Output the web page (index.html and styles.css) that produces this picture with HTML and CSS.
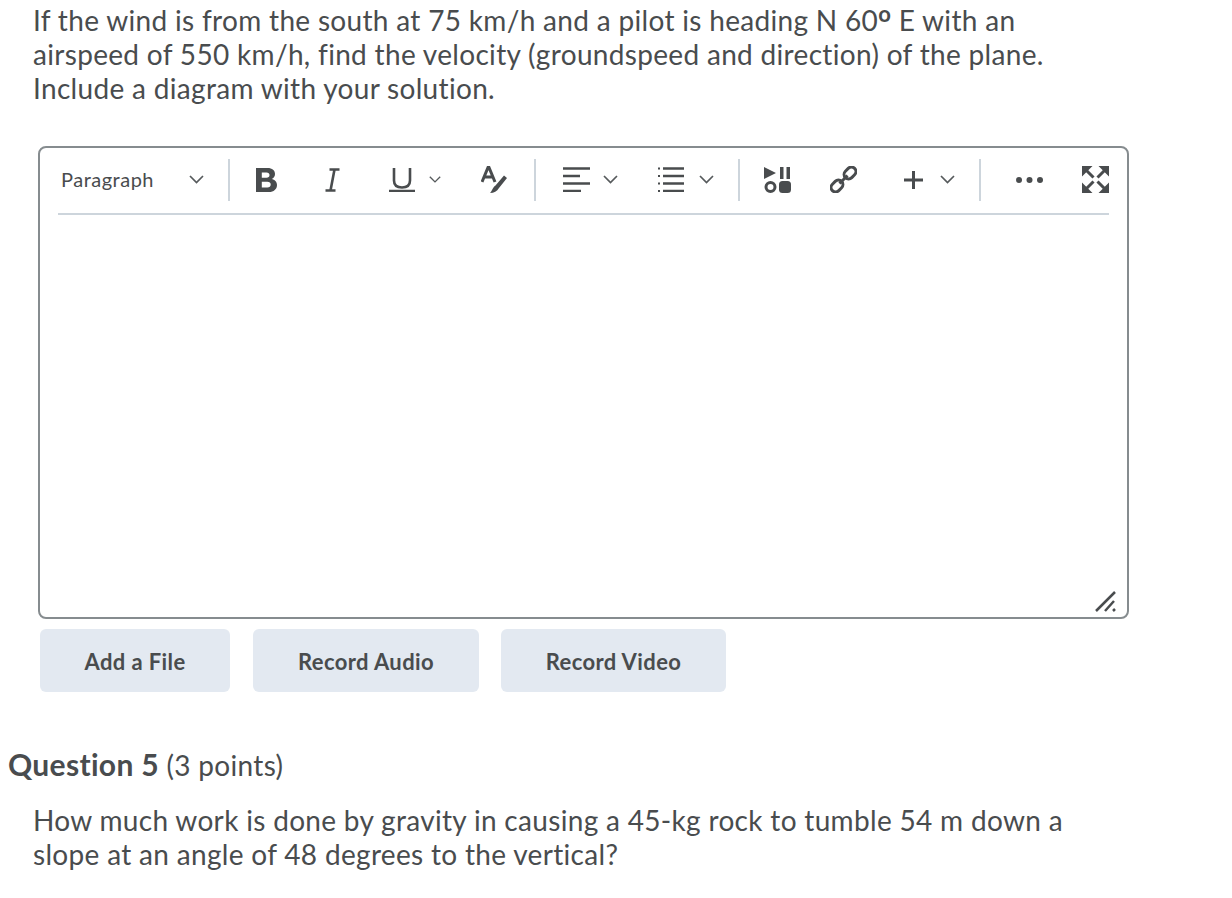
FILE: index.html
```html
<!DOCTYPE html>
<html lang="en">

<head>
    <meta charset="UTF-8">
    <title>Quiz</title>
    <link rel="stylesheet" href="styles.css">
</head>

<body>
    <p class="question-text first">If the wind is from the south at 75 km/h and a pilot is heading N 60<span class="deg">o</span> E with an airspeed of 550 km/h, find the velocity (groundspeed and direction) of the plane. Include a diagram with your solution.</p>

    <div class="editor">
        <div class="toolbar">
            <div class="format-select">Paragraph</div>
            <svg class="chev chev-format" viewBox="0 0 15 9"><path d="M1 1l6.5 6.5L14 1"/></svg>
            <span class="divider div-format"></span>

            <svg class="icon ico-bold" width="21" height="24" viewBox="0 0 21 24"><path class="solid" fill-rule="evenodd" d="M0 0h11.500c4.800 0 7.500 2.400 7.500 6 0 2.400-1.300 4.200-3.300 5 2.900.7 5.300 2.700 5.300 6 0 4.300-3.300 7-8 7H0zM5.800 4.500v5.300h4.700c1.900 0 3-1 3-2.700s-1.100-2.600-3-2.600zM5.800 13.800v5.700h5.500c2.200 0 3.400-1.100 3.400-2.900s-1.200-2.800-3.400-2.800z"/></svg>
            <svg class="icon ico-italic" width="15" height="24" viewBox="0 0 15 24"><path class="line" d="M4.500 1.500h10M.5 22.500h10M9.500 1.500l-4 21"/></svg>
            <svg class="icon ico-under" width="26" height="25" viewBox="0 0 26 25"><path class="line" d="M5 1v12.500c0 4.500 3 7 8 7s8-2.500 8-7V1M0 24h26"/></svg>
            <svg class="chev chev-under" viewBox="0 0 15 9"><path d="M1 1l6.500 6.500L14 1"/></svg>
            <svg class="icon ico-color" width="26" height="27" viewBox="0 0 26 27"><path class="line thick" d="M1 16L7 1.500h1L14 16M3.500 11h9"/><path class="solid" d="M23 9.500l3 2.500-8 10c-2 3.500-5 4.800-9 5 2.200-1.800 2.500-5.500 5.500-7.500z"/></svg>
            <span class="divider div-color"></span>

            <svg class="icon ico-align" width="27" height="25" viewBox="0 0 27 25"><path class="line" d="M0 1.500h27M0 9h17M0 16.500h27M0 24h18"/></svg>
            <svg class="chev chev-align" viewBox="0 0 15 9"><path d="M1 1l6.500 6.500L14 1"/></svg>
            <svg class="icon ico-list" width="26" height="25" viewBox="0 0 26 25"><path class="line" d="M5 1.500h21M5 9h21M5 16.500h21M5 24h21"/><path class="solid" d="M0 .5h2v2H0zM0 8h2v2H0zM0 15.500h2v2H0zM0 23h2v2H0z"/></svg>
            <svg class="chev chev-list" viewBox="0 0 15 9"><path d="M1 1l6.500 6.500L14 1"/></svg>
            <span class="divider div-list"></span>

            <svg class="icon ico-media" width="27" height="26" viewBox="0 0 27 26"><path class="solid" d="M0 0l12 6-12 6zM16 0h3.500v12H16zM22.500 0H26v12h-3.500z"/><circle class="ring" cx="6.500" cy="20" r="4.500"/><rect class="solid" x="15" y="14" width="12" height="12" rx="3.500"/></svg>
            <svg class="icon ico-link" width="27" height="27" viewBox="0 0 27 27"><rect class="ring" x="-6.500" y="-4.500" width="13" height="9" rx="4.500" transform="translate(7 20) rotate(-45)"/><rect class="ring" x="-6.500" y="-4.500" width="13" height="9" rx="4.500" transform="translate(20 7) rotate(-45)"/><path class="line thick" d="M9.500 17.500l8-8"/></svg>
            <svg class="icon ico-plus" width="19" height="18" viewBox="0 0 19 18"><path class="line thick" d="M0 9h19M9.500 0v18"/></svg>
            <svg class="chev chev-plus" viewBox="0 0 15 9"><path d="M1 1l6.500 6.500L14 1"/></svg>
            <span class="divider div-plus"></span>

            <svg class="icon ico-dots" width="27" height="6" viewBox="0 0 27 6"><circle class="solid" cx="3" cy="3" r="3"/><circle class="solid" cx="13.500" cy="3" r="3"/><circle class="solid" cx="24" cy="3" r="3"/></svg>
            <svg class="icon ico-expand" width="27" height="27" viewBox="0 0 27 27"><path class="solid" d="M0 0h10.500L0 10.500zM27 0H16.500L27 10.500zM0 27h10.500L0 16.500zM27 27H16.500L27 16.500z"/><path class="line thick" d="M4 4l7.500 7.500M23 4l-7.500 7.500M4 23l7.500-7.500M23 23l-7.500-7.500"/></svg>
        </div>
        <div class="editor-body">
            <svg class="resize-grip" width="22" height="21" viewBox="0 0 22 21"><path d="M1 20L20 1M10 20l9-10M18 20l2-2"/></svg>
        </div>
    </div>

    <div class="attach-buttons">
        <button class="attach-btn btn-file">Add a File</button>
        <button class="attach-btn btn-audio">Record Audio</button>
        <button class="attach-btn btn-video">Record Video</button>
    </div>

    <h2 class="question-title"><strong>Question 5</strong> (3 points)</h2>
    <p class="question-text">How much work is done by gravity in causing a 45-kg rock to tumble 54 m down a slope at an angle of 48 degrees to the vertical?</p>
</body>

</html>
```

FILE: styles.css
```css
body {
    font-family: 'Lato', sans-serif;
    color: #494c4e;
    margin: 0;
    background-color: #ffffff;
}

.question-text {
    font-size: 28px;
    line-height: 34px;
    letter-spacing: 0.32px;
    margin: 0;
    padding-left: 33px;
    width: 1040px;
}

.question-text.first {
    padding-top: 3px;
}

.deg {
    font-size: 22px;
    font-weight: 700;
    vertical-align: 9px;
    line-height: 0;
}

.editor {
    box-sizing: border-box;
    width: 1091px;
    height: 473px;
    margin: 41px 0 0 38px;
    border: 2px solid #868c8f;
    border-radius: 8px;
    display: flex;
    flex-direction: column;
}

.toolbar {
    display: flex;
    align-items: center;
    height: 63px;
    padding-bottom: 2px;
    margin: 0 18px;
    border-bottom: 2px solid #cdd5dc;
}

.format-select {
    font-size: 20px;
    letter-spacing: 0.5px;
    width: 128px;
    padding: 0 0 2px 3px;
    flex: none;
}

.chev {
    flex: none;
    width: 15px;
    height: 9px;
    fill: none;
    stroke: #565a5c;
    stroke-width: 1.7;
}

.divider {
    flex: none;
    width: 2px;
    height: 42px;
    background-color: #cdd5dc;
}

.icon {
    flex: none;
}

.solid {
    fill: #494c4e;
}

.line {
    fill: none;
    stroke: #494c4e;
    stroke-width: 2.600;
}

.line.thick {
    stroke-width: 3;
}

.ring {
    fill: none;
    stroke: #494c4e;
    stroke-width: 3;
}

/* отступы между значками */
.div-format { margin-left: 24px; }
.ico-bold { margin-left: 26px; }
.ico-italic { margin-left: 48px; }
.ico-under { margin-left: 49px; }
.chev-under { margin-left: 14px; width: 12px; }
.ico-color { margin-left: 40px; }
.div-color { margin-left: 27px; }
.ico-align { margin-left: 27px; }
.chev-align { margin-left: 13px; }
.ico-list { margin-left: 40px; }
.chev-list { margin-left: 15px; }
.div-list { margin-left: 24px; }
.ico-media { margin-left: 24px; }
.ico-link { margin-left: 39px; }
.ico-plus { margin-left: 47px; }
.chev-plus { margin-left: 17px; }
.div-plus { margin-left: 24px; }
.ico-dots { margin-left: 35px; }
.ico-expand { margin-left: 39px; }

.editor-body {
    flex: 1;
    display: flex;
    justify-content: flex-end;
    align-items: flex-end;
    padding: 0 10px 5px 0;
}

.resize-grip {
    fill: none;
    stroke: #494c4e;
    stroke-width: 2.500;
}

.attach-buttons {
    display: flex;
    margin: 10px 0 0 40px;
}

.attach-btn {
    font-family: 'Lato', sans-serif;
    font-size: 22px;
    font-weight: 700;
    letter-spacing: 0.4px;
    color: #494c4e;
    background-color: #e3e9f1;
    border: none;
    border-radius: 6px;
    height: 63px;
    padding: 2px 0 0;
}

.btn-file { width: 190px; }
.btn-audio { width: 226px; margin-left: 23px; }
.btn-video { width: 225px; margin-left: 22px; }

.question-title {
    font-size: 28px;
    font-weight: 400;
    line-height: 34px;
    letter-spacing: 0.32px;
    margin: 55px 0 21px 8px;
}

.question-title strong {
    font-size: 30px;
    font-weight: 700;
}
```
